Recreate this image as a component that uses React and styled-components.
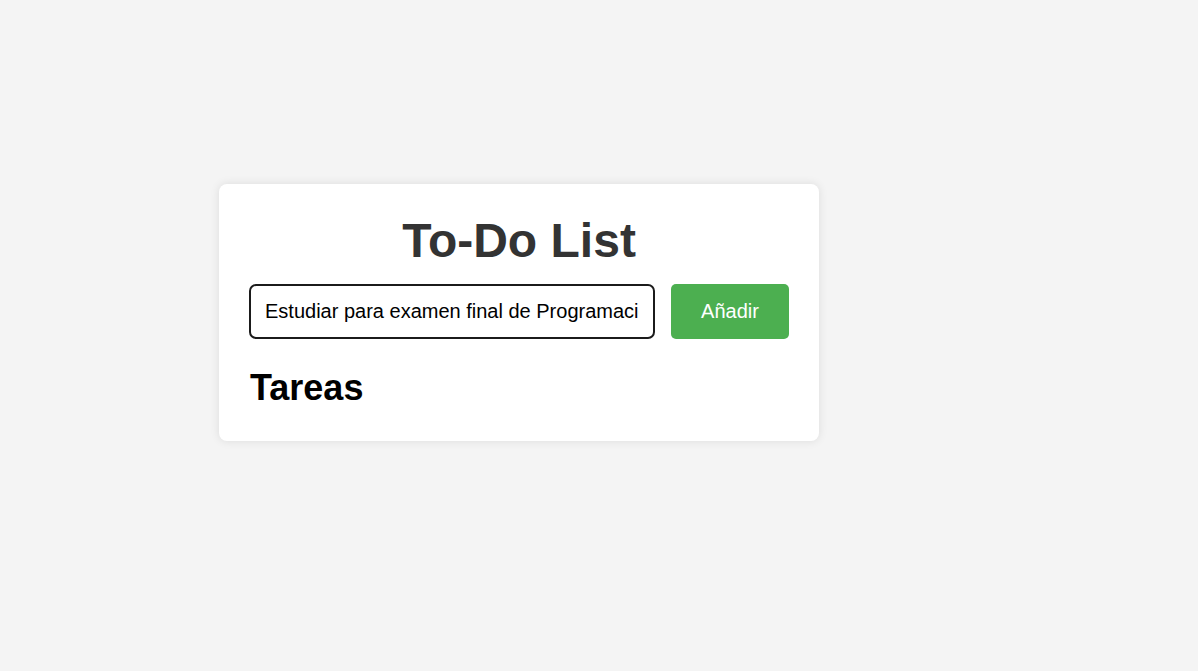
import React, { useState } from "react";
import styled, { createGlobalStyle } from "styled-components";

const GlobalStyle = createGlobalStyle`
  html, body {
    margin: 0;
    padding: 0;
    background: #f4f4f4;
    font-family: "Liberation Sans", Arial, sans-serif;
  }
`;

const Page = styled.div`
  display: flex;
  align-items: flex-start;
  min-height: 100vh;
  box-sizing: border-box;
  padding: 184px 0 0 219px;
`;

const Card = styled.div`
  width: 600px;
  box-sizing: border-box;
  padding: 29px 30px 33px;
  background: #fff;
  border-radius: 8px;
  box-shadow: 0 0 10px rgba(0, 0, 0, 0.1);
`;

const Title = styled.h1`
  margin: 0 0 16px;
  font-size: 48px;
  line-height: 55px;
  font-weight: bold;
  color: #333;
  text-align: center;
`;

const AddForm = styled.form`
  display: flex;
  gap: 16px;
  margin: 0 0 29px;
`;

const TaskInput = styled.input`
  flex: 1;
  min-width: 0;
  height: 55px;
  box-sizing: border-box;
  padding: 0 14px;
  border: 2px solid #1b1b1b;
  border-radius: 7px;
  font-family: inherit;
  font-size: 20px;
  color: #000;
  outline: none;
`;

const AddButton = styled.button`
  width: 118px;
  height: 55px;
  border: none;
  border-radius: 5px;
  background: #4caf50;
  color: #fff;
  font-family: inherit;
  font-size: 20px;
  cursor: pointer;
`;

const SectionTitle = styled.h2`
  margin: 0;
  padding-left: 1px;
  font-size: 36px;
  line-height: 40px;
  font-weight: bold;
  color: #000;
`;

const TaskList = styled.ul`
  list-style: none;
  margin: 0;
  padding: 0;
`;

function App() {
  const [text, setText] = useState("Estudiar para examen final de Programación");
  const [tasks, setTasks] = useState([]);

  const addTask = (e) => {
    e.preventDefault();
    if (!text.trim()) return;
    setTasks([...tasks, text.trim()]);
    setText("");
  };

  return (
    <>
      <GlobalStyle />
      <Page>
        <Card>
          <Title>To-Do List</Title>
          <AddForm onSubmit={addTask}>
            <TaskInput
              type="text"
              value={text}
              onChange={(e) => setText(e.target.value)}
            />
            <AddButton type="submit">Añadir</AddButton>
          </AddForm>
          <SectionTitle>Tareas</SectionTitle>
          <TaskList>
            {tasks.map((t, i) => (
              <li key={i}>{t}</li>
            ))}
          </TaskList>
        </Card>
      </Page>
    </>
  );
}

export default App;
